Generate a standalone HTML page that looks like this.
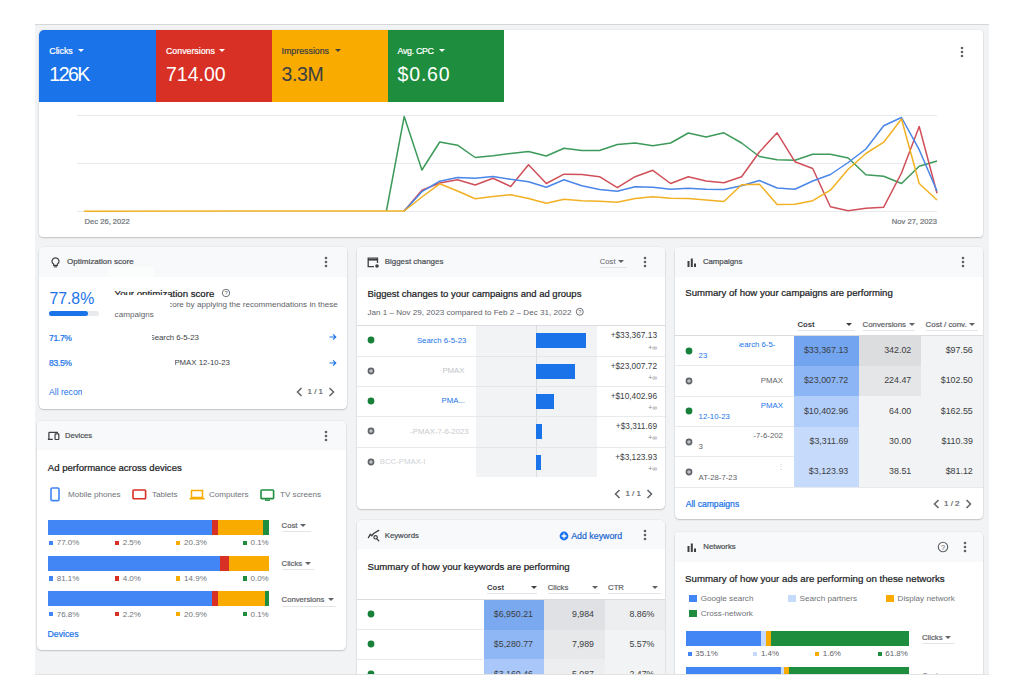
<!DOCTYPE html><html><head><meta charset="utf-8"><style>
html,body{margin:0;padding:0;background:#fff;width:1024px;height:700px;overflow:hidden;position:relative;font-family:"Liberation Sans", sans-serif}
.t{position:absolute;white-space:nowrap;line-height:1;}
.r{position:absolute;}
.card{position:absolute;background:#fff;border-radius:6px;box-shadow:0 1px 1.5px rgba(60,64,67,.24),0 0 0 0.6px rgba(60,64,67,.07);overflow:hidden}
.hdr{position:absolute;left:0;top:0;right:0;background:#f8f9fa}
</style></head><body>
<div class="r" style="left:35.00px;top:24.00px;width:954.00px;height:651.00px;background:#f1f3f4;"></div>
<div class="r" style="left:35.00px;top:24.00px;width:954.00px;height:1.00px;background:#d5d7d9;"></div>
<div class="card" style="left:39px;top:30px;width:944px;height:207px;border-radius:4px">
</div>
<div class="r" style="left:39.00px;top:30.00px;width:465.00px;height:72.20px;background:linear-gradient(to right,#1a73e8 0 117.1px,#d93025 117.1px 232.7px,#f9ab00 232.7px 348.8px,#1e8e3e 348.8px);border-top-left-radius:5px"></div>
<div class="t" style="left:49.30px;top:46.85px;font-size:8.8px;color:#fff;font-weight:400;-webkit-text-stroke:0.22px #fff;">Clicks</div>
<div class="r" style="left:77.50px;top:49.00px;width:0;height:0;border-left:3.6px solid transparent;border-right:3.6px solid transparent;border-top:3.6px solid #fff"></div>
<div class="t" style="left:49.30px;top:64.89px;font-size:19.5px;color:#fff;font-weight:400;letter-spacing:-1.5px;">126K</div>
<div class="t" style="left:166.00px;top:46.85px;font-size:8.8px;color:#fff;font-weight:400;-webkit-text-stroke:0.22px #fff;">Conversions</div>
<div class="r" style="left:219.10px;top:49.00px;width:0;height:0;border-left:3.6px solid transparent;border-right:3.6px solid transparent;border-top:3.6px solid #fff"></div>
<div class="t" style="left:166.00px;top:64.89px;font-size:19.5px;color:#fff;font-weight:400;letter-spacing:0px;">714.00</div>
<div class="t" style="left:281.60px;top:46.85px;font-size:8.8px;color:#3c4043;font-weight:400;-webkit-text-stroke:0.22px #3c4043;">Impressions</div>
<div class="r" style="left:335.00px;top:49.00px;width:0;height:0;border-left:3.6px solid transparent;border-right:3.6px solid transparent;border-top:3.6px solid #3c4043"></div>
<div class="t" style="left:281.60px;top:64.89px;font-size:19.5px;color:#3c4043;font-weight:400;letter-spacing:-0.4px;">3.3M</div>
<div class="t" style="left:397.60px;top:46.85px;font-size:8.8px;color:#fff;font-weight:400;letter-spacing:-0.3px;-webkit-text-stroke:0.22px #fff;">Avg. CPC</div>
<div class="r" style="left:438.90px;top:49.00px;width:0;height:0;border-left:3.6px solid transparent;border-right:3.6px solid transparent;border-top:3.6px solid #fff"></div>
<div class="t" style="left:397.60px;top:64.89px;font-size:19.5px;color:#fff;font-weight:400;letter-spacing:0.8px;">$0.60</div>
<svg class="r" style="left:959.00px;top:45.00px" width="6" height="14" viewBox="0 0 6 14"><circle cx="3" cy="3" r="1.3" fill="#5f6368"/><circle cx="3" cy="7" r="1.3" fill="#5f6368"/><circle cx="3" cy="11" r="1.3" fill="#5f6368"/></svg>
<div class="r" style="left:77.00px;top:114.50px;width:860.00px;height:1.00px;background:#e8eaed;"></div>
<div class="r" style="left:77.00px;top:163.00px;width:860.00px;height:1.00px;background:#e8eaed;"></div>
<div class="r" style="left:77.00px;top:210.50px;width:860.00px;height:1.00px;background:#e8eaed;"></div>
<div class="t" style="left:84.60px;top:217.77px;font-size:7.6px;color:#70757a;font-weight:400;-webkit-text-stroke:0.22px #70757a;">Dec 26, 2022</div>
<div class="t" style="right:87.00px;top:217.77px;font-size:7.6px;color:#70757a;font-weight:400;-webkit-text-stroke:0.22px #70757a;">Nov 27, 2023</div>
<svg class="r" style="left:0;top:0" width="1024" height="240" viewBox="0 0 1024 240"><polyline points="386.4,211.0 404.2,116.5 421.9,170.0 439.7,142.0 457.5,145.2 475.2,157.5 493.0,155.7 510.7,153.5 528.5,151.5 546.3,156.0 564.0,148.2 581.8,150.5 599.5,150.5 617.3,144.5 635.1,143.0 652.8,145.7 670.6,143.0 688.3,133.0 706.1,137.0 723.9,132.8 741.6,143.0 759.4,156.5 777.1,159.8 794.9,160.2 812.7,154.2 830.4,154.2 848.2,158.0 865.9,174.8 883.7,176.3 901.5,183.5 919.2,166.2 937.0,161.0" fill="none" stroke="#3d9a5a" stroke-width="1.5" stroke-linejoin="round"/><polyline points="404.2,211.0 421.9,190.2 439.7,183.0 457.5,179.7 475.2,185.0 493.0,178.2 510.7,186.5 528.5,164.7 546.3,183.5 564.0,174.2 581.8,174.5 599.5,176.7 617.3,187.7 635.1,176.7 652.8,170.3 670.6,183.5 688.3,176.7 706.1,181.0 723.9,182.7 741.6,176.7 759.4,152.0 777.1,132.8 794.9,161.7 812.7,168.5 830.4,206.7 848.2,210.8 865.9,208.2 883.7,207.2 901.5,173.0 919.2,126.5 937.0,193.2" fill="none" stroke="#d0505a" stroke-width="1.5" stroke-linejoin="round"/><polyline points="404.2,211.0 421.9,191.7 439.7,181.2 457.5,177.5 475.2,178.2 493.0,176.5 510.7,179.3 528.5,181.7 546.3,187.2 564.0,179.7 581.8,185.7 599.5,189.5 617.3,191.3 635.1,186.8 652.8,187.2 670.6,189.2 688.3,188.3 706.1,189.3 723.9,189.5 741.6,185.7 759.4,180.5 777.1,188.0 794.9,189.2 812.7,181.0 830.4,174.5 848.2,162.5 865.9,149.0 883.7,125.7 901.5,117.5 919.2,149.7 937.0,191.0" fill="none" stroke="#4a86e8" stroke-width="1.5" stroke-linejoin="round"/><polyline points="84.0,211.2 404.2,211.0 421.9,197.0 439.7,183.8 457.5,191.0 475.2,198.8 493.0,196.5 510.7,194.7 528.5,198.5 546.3,203.3 564.0,199.2 581.8,200.7 599.5,201.3 617.3,202.2 635.1,198.5 652.8,196.7 670.6,198.2 688.3,198.5 706.1,200.0 723.9,201.5 741.6,184.7 759.4,184.2 777.1,204.5 794.9,204.2 812.7,200.7 830.4,190.2 848.2,169.2 865.9,153.5 883.7,142.2 901.5,119.0 919.2,183.5 937.0,200.0" fill="none" stroke="#f2b124" stroke-width="1.5" stroke-linejoin="round"/></svg>
<div class="card" style="left:39px;top:247px;width:308px;height:162px;border-radius:4.5px">
<div class="hdr" style="height:30px"></div>
</div>
<svg class="r" style="left:51px;top:256.5px;" width="10" height="11" viewBox="0 0 10 11"><path d="M4.5 0.9a3.3 3.3 0 0 0-1.9 6.1V8.3h3.8V7a3.3 3.3 0 0 0-1.9-6.1z" fill="none" stroke="#3c4043" stroke-width="1.15"/><rect x="2.9" y="9.3" width="3.2" height="1.1" fill="#3c4043"/></svg>
<div class="t" style="left:67.00px;top:257.89px;font-size:8.05px;color:#4d5156;font-weight:400;-webkit-text-stroke:0.22px #4d5156;">Optimization score</div>
<svg class="r" style="left:323.00px;top:255.00px" width="6" height="14" viewBox="0 0 6 14"><circle cx="3" cy="3" r="1.3" fill="#5f6368"/><circle cx="3" cy="7" r="1.3" fill="#5f6368"/><circle cx="3" cy="11" r="1.3" fill="#5f6368"/></svg>
<div class="t" style="left:49.40px;top:290.63px;font-size:15.8px;color:#1a73e8;font-weight:400;">77.8%</div>
<div class="r" style="left:49.40px;top:311.00px;width:49.60px;height:4.60px;background:#e8eaed;border-radius:3px"></div>
<div class="r" style="left:49.40px;top:311.00px;width:38.60px;height:4.60px;background:#1a73e8;border-radius:3px"></div>
<div class="t" style="left:114.60px;top:288.53px;font-size:9.65px;color:#202124;font-weight:400;-webkit-text-stroke:0.22px #202124;">Your optimization score</div>
<svg class="r" style="left:220.7px;top:287.7px;" width="10" height="10" viewBox="0 0 10 10"><circle cx="5" cy="5" r="3.7" fill="none" stroke="#5f6368" stroke-width="0.9"/><text x="5" y="7.2" font-size="5.8" text-anchor="middle" fill="#5f6368" font-family="Liberation Sans">?</text></svg>
<div class="t" style="left:114.60px;top:301.14px;font-size:8.1px;color:#5f6368;font-weight:400;">Improve your score by applying the recommendations in these</div>
<div class="t" style="left:114.60px;top:310.94px;font-size:8.1px;color:#5f6368;font-weight:400;">campaigns</div>
<div class="t" style="left:49.00px;top:333.72px;font-size:8.6px;color:#1a73e8;font-weight:400;letter-spacing:-0.35px;-webkit-text-stroke:0.22px #1a73e8;">71.7%</div>
<div class="t" style="right:825.10px;top:334.00px;font-size:7.8px;color:#3c4043;font-weight:400;">Search 6-5-23</div>
<svg class="r" style="left:328.5px;top:333.3px;" width="8" height="8" viewBox="0 0 8 8"><path d="M0.5 4h6M4 1.3L6.8 4L4 6.7" fill="none" stroke="#1a73e8" stroke-width="1.1"/></svg>
<div class="t" style="left:49.00px;top:359.12px;font-size:8.6px;color:#1a73e8;font-weight:400;letter-spacing:-0.35px;-webkit-text-stroke:0.22px #1a73e8;">83.5%</div>
<div class="t" style="right:794.10px;top:358.80px;font-size:7.8px;color:#3c4043;font-weight:400;">PMAX 12-10-23</div>
<svg class="r" style="left:328.5px;top:358.8px;" width="8" height="8" viewBox="0 0 8 8"><path d="M0.5 4h6M4 1.3L6.8 4L4 6.7" fill="none" stroke="#1a73e8" stroke-width="1.1"/></svg>
<div class="t" style="left:49.00px;top:387.92px;font-size:8.6px;color:#1a73e8;font-weight:400;">All recommendations</div>
<svg class="r" style="left:296.00px;top:387.30px;" width="7" height="10" viewBox="0 0 7 10"><polyline points="5.5,1 1.5,5 5.5,9" fill="none" stroke="#5f6368" stroke-width="1.5"/></svg>
<div class="t" style="left:307.50px;top:388.43px;font-size:8px;color:#5f6368;font-weight:400;-webkit-text-stroke:0.22px #5f6368;">1 / 1</div>
<svg class="r" style="left:328.10px;top:387.30px;" width="7" height="10" viewBox="0 0 7 10"><polyline points="1.5,1 5.5,5 1.5,9" fill="none" stroke="#5f6368" stroke-width="1.5"/></svg>
<div class="r" style="left:107.60px;top:266.60px;width:46.00px;height:10.50px;background:rgba(255,255,255,0.45);"></div>
<div class="r" style="left:108.00px;top:295.00px;width:62.40px;height:15.00px;background:#fff;"></div>
<div class="r" style="left:105.00px;top:327.00px;width:46.50px;height:22.00px;background:#fff;"></div>
<div class="r" style="left:105.00px;top:352.00px;width:70.00px;height:22.00px;background:#fff;"></div>
<div class="r" style="left:81.60px;top:383.00px;width:80.00px;height:18.00px;background:#fff;"></div>
<div class="card" style="left:37.2px;top:421px;width:309px;height:229px;border-radius:4.5px">
<div class="hdr" style="height:29px"></div>
</div>
<svg class="r" style="left:47px;top:431px;" width="13" height="10" viewBox="0 0 13 10"><path d="M1.9 1.3H11M1.9 1.3V8.4M0.9 8.4H5.8" fill="none" stroke="#3c4043" stroke-width="1.25"/><rect x="8.05" y="2.95" width="3.75" height="5.55" rx="0.4" fill="none" stroke="#3c4043" stroke-width="1.2"/></svg>
<div class="t" style="left:65.00px;top:432.37px;font-size:7.6px;color:#4d5156;font-weight:400;-webkit-text-stroke:0.22px #4d5156;">Devices</div>
<svg class="r" style="left:322.90px;top:429.00px" width="6" height="14" viewBox="0 0 6 14"><circle cx="3" cy="3" r="1.3" fill="#5f6368"/><circle cx="3" cy="7" r="1.3" fill="#5f6368"/><circle cx="3" cy="11" r="1.3" fill="#5f6368"/></svg>
<div class="t" style="left:47.80px;top:462.90px;font-size:9.57px;color:#202124;font-weight:400;-webkit-text-stroke:0.22px #202124;">Ad performance across devices</div>
<svg class="r" style="left:50px;top:486.5px;" width="10" height="15" viewBox="0 0 10 15"><rect x="1" y="1" width="8" height="12.6" rx="1.2" fill="none" stroke="#4285f4" stroke-width="1.6"/></svg>
<div class="t" style="left:67.90px;top:490.94px;font-size:8.1px;color:#6f7378;font-weight:400;">Mobile phones</div>
<svg class="r" style="left:131.5px;top:489px;" width="15" height="11" viewBox="0 0 15 11"><rect x="1" y="1" width="12.6" height="8.8" rx="0.8" fill="none" stroke="#d93025" stroke-width="1.6"/></svg>
<div class="t" style="left:152.00px;top:490.94px;font-size:8.1px;color:#6f7378;font-weight:400;">Tablets</div>
<svg class="r" style="left:188.5px;top:489px;" width="16" height="12" viewBox="0 0 16 12"><path d="M2.5 1.5h11v7h-11z" fill="none" stroke="#f9ab00" stroke-width="1.5"/><rect x="0.5" y="9" width="15" height="1.5" fill="#f9ab00"/></svg>
<div class="t" style="left:209.00px;top:490.94px;font-size:8.1px;color:#6f7378;font-weight:400;">Computers</div>
<svg class="r" style="left:260px;top:488.5px;" width="15" height="13" viewBox="0 0 15 13"><rect x="1" y="1" width="12.6" height="8.6" rx="0.8" fill="none" stroke="#1e8e3e" stroke-width="1.6"/><rect x="5" y="10.5" width="5" height="1.4" fill="#1e8e3e"/></svg>
<div class="t" style="left:280.00px;top:490.94px;font-size:8.1px;color:#6f7378;font-weight:400;">TV screens</div>
<div class="r" style="left:47.60px;top:520.00px;width:164.10px;height:15.00px;background:#4285f4;"></div>
<div class="r" style="left:211.70px;top:520.00px;width:6.30px;height:15.00px;background:#d93025;"></div>
<div class="r" style="left:218.00px;top:520.00px;width:44.50px;height:15.00px;background:#f9ab00;"></div>
<div class="r" style="left:262.50px;top:520.00px;width:6.70px;height:15.00px;background:#1e8e3e;"></div>
<div class="r" style="left:48.70px;top:540.70px;width:4.40px;height:4.40px;background:#4285f4;"></div>
<div class="t" style="left:56.70px;top:539.43px;font-size:8px;color:#70757a;font-weight:400;">77.0%</div>
<div class="r" style="left:114.70px;top:540.70px;width:4.40px;height:4.40px;background:#d93025;"></div>
<div class="t" style="left:122.70px;top:539.43px;font-size:8px;color:#70757a;font-weight:400;">2.5%</div>
<div class="r" style="left:176.10px;top:540.70px;width:4.40px;height:4.40px;background:#f9ab00;"></div>
<div class="t" style="left:184.10px;top:539.43px;font-size:8px;color:#70757a;font-weight:400;">20.3%</div>
<div class="r" style="left:242.50px;top:540.70px;width:4.40px;height:4.40px;background:#1e8e3e;"></div>
<div class="t" style="left:250.50px;top:539.43px;font-size:8px;color:#70757a;font-weight:400;">0.1%</div>
<div class="t" style="left:281.60px;top:522.28px;font-size:7.7px;color:#5f6368;font-weight:400;-webkit-text-stroke:0.22px #5f6368;">Cost</div>
<div class="r" style="left:300.10px;top:524.25px;width:0;height:0;border-left:3.5px solid transparent;border-right:3.5px solid transparent;border-top:3.5px solid #5f6368"></div>
<div class="r" style="left:281.60px;top:531.30px;width:29.40px;height:0.80px;background:#e3e5e8;"></div>
<div class="r" style="left:47.60px;top:555.60px;width:172.50px;height:15.00px;background:#4285f4;"></div>
<div class="r" style="left:220.10px;top:555.60px;width:9.10px;height:15.00px;background:#d93025;"></div>
<div class="r" style="left:229.20px;top:555.60px;width:40.00px;height:15.00px;background:#f9ab00;"></div>
<div class="r" style="left:48.70px;top:576.30px;width:4.40px;height:4.40px;background:#4285f4;"></div>
<div class="t" style="left:56.70px;top:575.03px;font-size:8px;color:#70757a;font-weight:400;">81.1%</div>
<div class="r" style="left:114.70px;top:576.30px;width:4.40px;height:4.40px;background:#d93025;"></div>
<div class="t" style="left:122.70px;top:575.03px;font-size:8px;color:#70757a;font-weight:400;">4.0%</div>
<div class="r" style="left:176.10px;top:576.30px;width:4.40px;height:4.40px;background:#f9ab00;"></div>
<div class="t" style="left:184.10px;top:575.03px;font-size:8px;color:#70757a;font-weight:400;">14.9%</div>
<div class="r" style="left:242.50px;top:576.30px;width:4.40px;height:4.40px;background:#1e8e3e;"></div>
<div class="t" style="left:250.50px;top:575.03px;font-size:8px;color:#70757a;font-weight:400;">0.0%</div>
<div class="t" style="left:281.60px;top:559.58px;font-size:7.7px;color:#5f6368;font-weight:400;-webkit-text-stroke:0.22px #5f6368;">Clicks</div>
<div class="r" style="left:305.10px;top:561.55px;width:0;height:0;border-left:3.5px solid transparent;border-right:3.5px solid transparent;border-top:3.5px solid #5f6368"></div>
<div class="r" style="left:281.60px;top:568.60px;width:32.40px;height:0.80px;background:#e3e5e8;"></div>
<div class="r" style="left:47.60px;top:591.10px;width:164.10px;height:15.00px;background:#4285f4;"></div>
<div class="r" style="left:211.70px;top:591.10px;width:6.30px;height:15.00px;background:#d93025;"></div>
<div class="r" style="left:218.00px;top:591.10px;width:46.60px;height:15.00px;background:#f9ab00;"></div>
<div class="r" style="left:264.60px;top:591.10px;width:4.60px;height:15.00px;background:#1e8e3e;"></div>
<div class="r" style="left:48.70px;top:611.80px;width:4.40px;height:4.40px;background:#4285f4;"></div>
<div class="t" style="left:56.70px;top:610.53px;font-size:8px;color:#70757a;font-weight:400;">76.8%</div>
<div class="r" style="left:114.70px;top:611.80px;width:4.40px;height:4.40px;background:#d93025;"></div>
<div class="t" style="left:122.70px;top:610.53px;font-size:8px;color:#70757a;font-weight:400;">2.2%</div>
<div class="r" style="left:176.10px;top:611.80px;width:4.40px;height:4.40px;background:#f9ab00;"></div>
<div class="t" style="left:184.10px;top:610.53px;font-size:8px;color:#70757a;font-weight:400;">20.9%</div>
<div class="r" style="left:242.50px;top:611.80px;width:4.40px;height:4.40px;background:#1e8e3e;"></div>
<div class="t" style="left:250.50px;top:610.53px;font-size:8px;color:#70757a;font-weight:400;">0.1%</div>
<div class="t" style="left:281.60px;top:596.48px;font-size:7.7px;color:#5f6368;font-weight:400;-webkit-text-stroke:0.22px #5f6368;">Conversions</div>
<div class="r" style="left:327.60px;top:598.45px;width:0;height:0;border-left:3.5px solid transparent;border-right:3.5px solid transparent;border-top:3.5px solid #5f6368"></div>
<div class="r" style="left:281.60px;top:605.50px;width:54.40px;height:0.80px;background:#e3e5e8;"></div>
<div class="t" style="left:47.60px;top:629.94px;font-size:8.7px;color:#1a73e8;font-weight:400;-webkit-text-stroke:0.22px #1a73e8;">Devices</div>
<div class="card" style="left:357px;top:247px;width:308px;height:262px;border-radius:4.5px">
<div class="hdr" style="height:30px"></div>
</div>
<svg class="r" style="left:367px;top:256.5px;" width="13" height="11" viewBox="0 0 13 11"><path d="M10.5 6V1.2H1.2v8.5H7" fill="none" stroke="#3c4043" stroke-width="1.3"/><path d="M1.2 2.8h9.3" stroke="#3c4043" stroke-width="1.6"/><circle cx="10" cy="9" r="1.8" fill="#3c4043"/></svg>
<div class="t" style="left:384.70px;top:257.97px;font-size:7.95px;color:#4d5156;font-weight:400;-webkit-text-stroke:0.22px #4d5156;">Biggest changes</div>
<div class="t" style="left:599.80px;top:258.28px;font-size:7.7px;color:#5f6368;font-weight:400;">Cost</div>
<div class="r" style="left:618.30px;top:260.25px;width:0;height:0;border-left:3.5px solid transparent;border-right:3.5px solid transparent;border-top:3.5px solid #5f6368"></div>
<div class="r" style="left:599.80px;top:267.30px;width:27.00px;height:0.80px;background:#e3e5e8;"></div>
<svg class="r" style="left:641.50px;top:255.00px" width="6" height="14" viewBox="0 0 6 14"><circle cx="3" cy="3" r="1.3" fill="#5f6368"/><circle cx="3" cy="7" r="1.3" fill="#5f6368"/><circle cx="3" cy="11" r="1.3" fill="#5f6368"/></svg>
<div class="t" style="left:367.50px;top:288.56px;font-size:9.5px;color:#202124;font-weight:400;-webkit-text-stroke:0.22px #202124;">Biggest changes to your campaigns and ad groups</div>
<div class="t" style="left:367.50px;top:308.76px;font-size:8.08px;color:#5f6368;font-weight:400;">Jan 1 &ndash; Nov 29, 2023 compared to Feb 2 &ndash; Dec 31, 2022</div>
<svg class="r" style="left:574.6px;top:307.4px;" width="9.6" height="9.6" viewBox="0 0 9.6 9.6"><circle cx="4.8" cy="4.8" r="3.5" fill="none" stroke="#5f6368" stroke-width="0.9"/><text x="4.8" y="6.89" font-size="5.51" text-anchor="middle" fill="#5f6368" font-family="Liberation Sans">?</text></svg>
<div class="r" style="left:357.00px;top:325.00px;width:308.00px;height:0.80px;background:#dadce0;"></div>
<div class="r" style="left:475.50px;top:325.50px;width:121.60px;height:151.00px;background:#f1f3f4;"></div>
<div class="r" style="left:535.60px;top:325.50px;width:0.80px;height:151.00px;background:#dadce0;"></div>
<div class="r" style="left:536.10px;top:333.30px;width:49.50px;height:15.00px;background:#1a73e8;"></div>
<div class="t" style="right:367.00px;top:331.47px;font-size:8.3px;color:#3c4043;font-weight:400;">+$33,367.13</div>
<div class="t" style="right:367.00px;top:344.54px;font-size:6.8px;color:#80868b;font-weight:400;">+&infin;</div>
<svg class="r" style="left:366.00px;top:335.40px;" width="10" height="10" viewBox="0 0 10 10"><circle cx="5" cy="5" r="3.4" fill="#188038"/></svg>
<div class="r" style="left:357.00px;top:355.60px;width:308.00px;height:0.80px;background:#e8eaed;"></div>
<div class="r" style="left:536.10px;top:363.60px;width:39.40px;height:15.00px;background:#1a73e8;"></div>
<div class="t" style="right:367.00px;top:361.77px;font-size:8.3px;color:#3c4043;font-weight:400;">+$23,007.72</div>
<div class="t" style="right:367.00px;top:374.84px;font-size:6.8px;color:#80868b;font-weight:400;">+&infin;</div>
<svg class="r" style="left:366.00px;top:365.70px;" width="10" height="10" viewBox="0 0 10 10"><circle cx="5" cy="5" r="2.6" fill="#bdc1c6" stroke="#5f6368" stroke-width="1.6"/></svg>
<div class="r" style="left:357.00px;top:385.90px;width:308.00px;height:0.80px;background:#e8eaed;"></div>
<div class="r" style="left:536.10px;top:393.90px;width:17.50px;height:15.00px;background:#1a73e8;"></div>
<div class="t" style="right:367.00px;top:392.07px;font-size:8.3px;color:#3c4043;font-weight:400;">+$10,402.96</div>
<div class="t" style="right:367.00px;top:405.14px;font-size:6.8px;color:#80868b;font-weight:400;">+&infin;</div>
<svg class="r" style="left:366.00px;top:396.00px;" width="10" height="10" viewBox="0 0 10 10"><circle cx="5" cy="5" r="3.4" fill="#188038"/></svg>
<div class="r" style="left:357.00px;top:416.20px;width:308.00px;height:0.80px;background:#e8eaed;"></div>
<div class="r" style="left:536.10px;top:424.20px;width:5.70px;height:15.00px;background:#1a73e8;"></div>
<div class="t" style="right:367.00px;top:422.37px;font-size:8.3px;color:#3c4043;font-weight:400;">+$3,311.69</div>
<div class="t" style="right:367.00px;top:435.44px;font-size:6.8px;color:#80868b;font-weight:400;">+&infin;</div>
<svg class="r" style="left:366.00px;top:426.30px;" width="10" height="10" viewBox="0 0 10 10"><circle cx="5" cy="5" r="2.6" fill="#bdc1c6" stroke="#5f6368" stroke-width="1.6"/></svg>
<div class="r" style="left:357.00px;top:446.50px;width:308.00px;height:0.80px;background:#e8eaed;"></div>
<div class="r" style="left:536.10px;top:454.50px;width:5.00px;height:15.00px;background:#1a73e8;"></div>
<div class="t" style="right:367.00px;top:452.67px;font-size:8.3px;color:#3c4043;font-weight:400;">+$3,123.93</div>
<div class="t" style="right:367.00px;top:465.74px;font-size:6.8px;color:#80868b;font-weight:400;">+&infin;</div>
<svg class="r" style="left:366.00px;top:456.60px;" width="10" height="10" viewBox="0 0 10 10"><circle cx="5" cy="5" r="2.6" fill="#bdc1c6" stroke="#5f6368" stroke-width="1.6"/></svg>
<div class="t" style="right:557.70px;top:336.70px;font-size:7.8px;color:#1a73e8;font-weight:400;">Search 6-5-23</div>
<div class="t" style="right:559.50px;top:367.00px;font-size:7.8px;color:#c0c4c8;font-weight:400;">PMAX</div>
<div class="t" style="right:559.10px;top:397.30px;font-size:7.8px;color:#1a73e8;font-weight:400;">PMA...</div>
<div class="t" style="right:555.30px;top:427.60px;font-size:7.8px;color:#c8cbcf;font-weight:400;">BCC-PMAX-7-6-2023</div>
<div class="t" style="left:379.70px;top:457.90px;font-size:7.8px;color:#d0d3d6;font-weight:400;">BCC-PMAX-LAT-28-7-23</div>
<div class="r" style="left:378.00px;top:330.00px;width:30.00px;height:22.00px;background:#fff;"></div>
<div class="r" style="left:380.00px;top:360.00px;width:60.00px;height:22.00px;background:#fff;"></div>
<div class="r" style="left:378.00px;top:420.00px;width:32.00px;height:22.00px;background:#fff;"></div>
<div class="r" style="left:425.00px;top:450.00px;width:50.00px;height:24.00px;background:#fff;"></div>
<div class="r" style="left:475.50px;top:355.60px;width:121.60px;height:0.80px;background:#e4e6e9;"></div>
<div class="r" style="left:475.50px;top:385.90px;width:121.60px;height:0.80px;background:#e4e6e9;"></div>
<div class="r" style="left:475.50px;top:416.20px;width:121.60px;height:0.80px;background:#e4e6e9;"></div>
<div class="r" style="left:475.50px;top:446.50px;width:121.60px;height:0.80px;background:#e4e6e9;"></div>
<svg class="r" style="left:613.90px;top:488.75px;" width="7" height="10" viewBox="0 0 7 10"><polyline points="5.5,1 1.5,5 5.5,9" fill="none" stroke="#5f6368" stroke-width="1.5"/></svg>
<div class="t" style="left:625.40px;top:489.88px;font-size:8px;color:#5f6368;font-weight:400;-webkit-text-stroke:0.22px #5f6368;">1 / 1</div>
<svg class="r" style="left:646.00px;top:488.75px;" width="7" height="10" viewBox="0 0 7 10"><polyline points="1.5,1 5.5,5 1.5,9" fill="none" stroke="#5f6368" stroke-width="1.5"/></svg>
<div class="card" style="left:675px;top:247px;width:308px;height:272px;border-radius:4.5px">
<div class="hdr" style="height:30px"></div>
</div>
<svg class="r" style="left:686.5px;top:257.5px;" width="10" height="9" viewBox="0 0 10 9"><rect x="0.5" y="3" width="2" height="6" fill="#3c4043"/><rect x="3.8" y="0.5" width="2" height="8.5" fill="#3c4043"/><rect x="7" y="5.5" width="2" height="3.5" fill="#3c4043"/></svg>
<div class="t" style="left:702.90px;top:258.10px;font-size:7.8px;color:#4d5156;font-weight:400;-webkit-text-stroke:0.22px #4d5156;">Campaigns</div>
<svg class="r" style="left:959.50px;top:255.00px" width="6" height="14" viewBox="0 0 6 14"><circle cx="3" cy="3" r="1.3" fill="#5f6368"/><circle cx="3" cy="7" r="1.3" fill="#5f6368"/><circle cx="3" cy="11" r="1.3" fill="#5f6368"/></svg>
<div class="t" style="left:685.30px;top:288.47px;font-size:9.6px;color:#202124;font-weight:400;-webkit-text-stroke:0.22px #202124;">Summary of how your campaigns are performing</div>
<div class="t" style="left:797.40px;top:320.68px;font-size:7.7px;color:#3c4043;font-weight:700;">Cost</div>
<div class="r" style="left:846.20px;top:322.65px;width:0;height:0;border-left:3.5px solid transparent;border-right:3.5px solid transparent;border-top:3.5px solid #3c4043"></div>
<div class="r" style="left:797.40px;top:329.70px;width:57.60px;height:0.80px;background:#e3e5e8;"></div>
<div class="t" style="left:862.60px;top:320.60px;font-size:7.8px;color:#5f6368;font-weight:400;-webkit-text-stroke:0.22px #5f6368;">Conversions</div>
<div class="r" style="left:908.80px;top:322.65px;width:0;height:0;border-left:3.5px solid transparent;border-right:3.5px solid transparent;border-top:3.5px solid #5f6368"></div>
<div class="r" style="left:862.60px;top:329.70px;width:52.80px;height:0.80px;background:#e3e5e8;"></div>
<div class="t" style="left:925.60px;top:320.51px;font-size:7.9px;color:#5f6368;font-weight:400;-webkit-text-stroke:0.22px #5f6368;">Cost / conv.</div>
<div class="r" style="left:969.30px;top:322.65px;width:0;height:0;border-left:3.5px solid transparent;border-right:3.5px solid transparent;border-top:3.5px solid #5f6368"></div>
<div class="r" style="left:925.60px;top:329.70px;width:52.90px;height:0.80px;background:#e3e5e8;"></div>
<div class="r" style="left:675.00px;top:335.00px;width:308.00px;height:0.80px;background:#dadce0;"></div>
<div class="r" style="left:794.00px;top:335.80px;width:65.00px;height:30.30px;background:#72a4ef;"></div>
<div class="r" style="left:859.00px;top:335.80px;width:62.00px;height:30.30px;background:#dcdddf;"></div>
<div class="r" style="left:921.00px;top:335.80px;width:62.00px;height:30.30px;background:#f1f3f4;"></div>
<div class="t" style="right:175.70px;top:345.97px;font-size:8.9px;color:#3c4043;font-weight:400;">$33,367.13</div>
<div class="t" style="right:112.70px;top:345.97px;font-size:8.9px;color:#3c4043;font-weight:400;">342.02</div>
<div class="t" style="right:51.20px;top:345.97px;font-size:8.9px;color:#3c4043;font-weight:400;">$97.56</div>
<svg class="r" style="left:684.10px;top:345.60px;" width="10" height="10" viewBox="0 0 10 10"><circle cx="5" cy="5" r="3.4" fill="#188038"/></svg>
<div class="r" style="left:794.00px;top:366.10px;width:65.00px;height:30.30px;background:#8cb5f6;"></div>
<div class="r" style="left:859.00px;top:366.10px;width:62.00px;height:30.30px;background:#e5e6e8;"></div>
<div class="r" style="left:921.00px;top:366.10px;width:62.00px;height:30.30px;background:#f1f3f4;"></div>
<div class="r" style="left:675.00px;top:365.30px;width:119.00px;height:0.80px;background:#e8eaed;"></div>
<div class="t" style="right:175.70px;top:376.27px;font-size:8.9px;color:#3c4043;font-weight:400;">$23,007.72</div>
<div class="t" style="right:112.70px;top:376.27px;font-size:8.9px;color:#3c4043;font-weight:400;">224.47</div>
<div class="t" style="right:51.20px;top:376.27px;font-size:8.9px;color:#3c4043;font-weight:400;">$102.50</div>
<svg class="r" style="left:684.10px;top:375.90px;" width="10" height="10" viewBox="0 0 10 10"><circle cx="5" cy="5" r="2.6" fill="#bdc1c6" stroke="#5f6368" stroke-width="1.6"/></svg>
<div class="r" style="left:794.00px;top:396.40px;width:65.00px;height:30.30px;background:#b1cdfa;"></div>
<div class="r" style="left:859.00px;top:396.40px;width:62.00px;height:30.30px;background:#f2f3f4;"></div>
<div class="r" style="left:921.00px;top:396.40px;width:62.00px;height:30.30px;background:#f1f3f4;"></div>
<div class="r" style="left:675.00px;top:395.60px;width:119.00px;height:0.80px;background:#e8eaed;"></div>
<div class="t" style="right:175.70px;top:406.57px;font-size:8.9px;color:#3c4043;font-weight:400;">$10,402.96</div>
<div class="t" style="right:112.70px;top:406.57px;font-size:8.9px;color:#3c4043;font-weight:400;">64.00</div>
<div class="t" style="right:51.20px;top:406.57px;font-size:8.9px;color:#3c4043;font-weight:400;">$162.55</div>
<svg class="r" style="left:684.10px;top:406.20px;" width="10" height="10" viewBox="0 0 10 10"><circle cx="5" cy="5" r="3.4" fill="#188038"/></svg>
<div class="r" style="left:794.00px;top:426.70px;width:65.00px;height:30.30px;background:#c6dafb;"></div>
<div class="r" style="left:859.00px;top:426.70px;width:62.00px;height:30.30px;background:#f2f3f4;"></div>
<div class="r" style="left:921.00px;top:426.70px;width:62.00px;height:30.30px;background:#f1f3f4;"></div>
<div class="r" style="left:675.00px;top:425.90px;width:119.00px;height:0.80px;background:#e8eaed;"></div>
<div class="t" style="right:175.70px;top:436.87px;font-size:8.9px;color:#3c4043;font-weight:400;">$3,311.69</div>
<div class="t" style="right:112.70px;top:436.87px;font-size:8.9px;color:#3c4043;font-weight:400;">30.00</div>
<div class="t" style="right:51.20px;top:436.87px;font-size:8.9px;color:#3c4043;font-weight:400;">$110.39</div>
<svg class="r" style="left:684.10px;top:436.50px;" width="10" height="10" viewBox="0 0 10 10"><circle cx="5" cy="5" r="2.6" fill="#bdc1c6" stroke="#5f6368" stroke-width="1.6"/></svg>
<div class="r" style="left:794.00px;top:457.00px;width:65.00px;height:30.30px;background:#c6dafb;"></div>
<div class="r" style="left:859.00px;top:457.00px;width:62.00px;height:30.30px;background:#f2f3f4;"></div>
<div class="r" style="left:921.00px;top:457.00px;width:62.00px;height:30.30px;background:#f1f3f4;"></div>
<div class="r" style="left:675.00px;top:456.20px;width:119.00px;height:0.80px;background:#e8eaed;"></div>
<div class="t" style="right:175.70px;top:467.17px;font-size:8.9px;color:#3c4043;font-weight:400;">$3,123.93</div>
<div class="t" style="right:112.70px;top:467.17px;font-size:8.9px;color:#3c4043;font-weight:400;">38.51</div>
<div class="t" style="right:51.20px;top:467.17px;font-size:8.9px;color:#3c4043;font-weight:400;">$81.12</div>
<svg class="r" style="left:684.10px;top:466.80px;" width="10" height="10" viewBox="0 0 10 10"><circle cx="5" cy="5" r="2.6" fill="#bdc1c6" stroke="#5f6368" stroke-width="1.6"/></svg>
<div class="r" style="left:675.00px;top:486.50px;width:308.00px;height:0.80px;background:#e8eaed;"></div>
<div class="t" style="right:248.60px;top:340.70px;font-size:7.8px;color:#1a73e8;font-weight:400;">Search 6-5-</div>
<div class="t" style="left:698.60px;top:352.30px;font-size:7.8px;color:#1a73e8;font-weight:400;">23</div>
<div class="t" style="right:241.10px;top:377.10px;font-size:7.8px;color:#5f6368;font-weight:400;">PMAX</div>
<div class="t" style="right:241.10px;top:401.90px;font-size:7.8px;color:#1a73e8;font-weight:400;">PMAX</div>
<div class="t" style="left:698.60px;top:412.80px;font-size:7.8px;color:#1a73e8;font-weight:400;">12-10-23</div>
<div class="t" style="right:241.10px;top:431.90px;font-size:7.8px;color:#5f6368;font-weight:400;">BCC-PMAX-7-6-202</div>
<div class="t" style="left:698.60px;top:443.30px;font-size:7.8px;color:#5f6368;font-weight:400;">3</div>
<div class="t" style="left:698.60px;top:473.90px;font-size:7.8px;color:#5f6368;font-weight:400;">AT-28-7-23</div>
<div class="r" style="left:696.00px;top:339.00px;width:42.50px;height:11.00px;background:#fff;"></div>
<div class="r" style="left:696.00px;top:374.00px;width:64.50px;height:13.00px;background:#fff;"></div>
<div class="r" style="left:696.00px;top:399.00px;width:64.50px;height:11.00px;background:#fff;"></div>
<div class="r" style="left:696.00px;top:429.00px;width:57.00px;height:11.00px;background:#fff;"></div>
<div class="t" style="left:776.50px;top:462.70px;font-size:7.8px;color:#c8cbcf;font-weight:400;">&#8942;</div>
<div class="t" style="left:685.70px;top:500.02px;font-size:8.6px;color:#1a73e8;font-weight:400;-webkit-text-stroke:0.22px #1a73e8;">All campaigns</div>
<svg class="r" style="left:932.50px;top:499.00px;" width="7" height="10" viewBox="0 0 7 10"><polyline points="5.5,1 1.5,5 5.5,9" fill="none" stroke="#5f6368" stroke-width="1.5"/></svg>
<div class="t" style="left:944.00px;top:500.13px;font-size:8px;color:#5f6368;font-weight:400;-webkit-text-stroke:0.22px #5f6368;">1 / 2</div>
<svg class="r" style="left:964.60px;top:499.00px;" width="7" height="10" viewBox="0 0 7 10"><polyline points="1.5,1 5.5,5 1.5,9" fill="none" stroke="#5f6368" stroke-width="1.5"/></svg>
<div class="card" style="left:357px;top:519.7px;width:308px;height:200px;border-radius:4.5px">
<div class="hdr" style="height:29.7px"></div>
</div>
<svg class="r" style="left:366px;top:528px;" width="14" height="14" viewBox="0 0 14 14"><path d="M2.4 9.6L4.4 6.2L5.7 7.9L7.6 5.5L12.7 2.4" fill="none" stroke="#3c4043" stroke-width="1.3" stroke-linecap="round" stroke-linejoin="round"/><circle cx="9.6" cy="9.3" r="1.7" fill="none" stroke="#3c4043" stroke-width="1.2"/><path d="M10.9 10.9L12.7 12.7" stroke="#3c4043" stroke-width="1.3" stroke-linecap="round"/></svg>
<div class="t" style="left:384.70px;top:531.50px;font-size:7.8px;color:#4d5156;font-weight:400;-webkit-text-stroke:0.22px #4d5156;">Keywords</div>
<svg class="r" style="left:558.7px;top:530.5px;" width="10" height="10" viewBox="0 0 10 10"><circle cx="5" cy="5" r="4.4" fill="#1a73e8"/><path d="M5 2.6v4.8M2.6 5h4.8" stroke="#fff" stroke-width="1.3"/></svg>
<div class="t" style="left:571.25px;top:531.75px;font-size:8.8px;color:#1967d2;font-weight:400;-webkit-text-stroke:0.22px #1967d2;">Add keyword</div>
<svg class="r" style="left:641.70px;top:528.30px" width="6" height="14" viewBox="0 0 6 14"><circle cx="3" cy="3" r="1.3" fill="#5f6368"/><circle cx="3" cy="7" r="1.3" fill="#5f6368"/><circle cx="3" cy="11" r="1.3" fill="#5f6368"/></svg>
<div class="t" style="left:367.50px;top:561.84px;font-size:9.64px;color:#202124;font-weight:400;-webkit-text-stroke:0.22px #202124;">Summary of how your keywords are performing</div>
<div class="t" style="left:486.90px;top:584.08px;font-size:7.7px;color:#3c4043;font-weight:700;">Cost</div>
<div class="r" style="left:530.50px;top:586.05px;width:0;height:0;border-left:3.5px solid transparent;border-right:3.5px solid transparent;border-top:3.5px solid #3c4043"></div>
<div class="r" style="left:486.90px;top:593.10px;width:50.30px;height:0.80px;background:#e3e5e8;"></div>
<div class="t" style="left:547.80px;top:584.08px;font-size:7.7px;color:#5f6368;font-weight:400;-webkit-text-stroke:0.22px #5f6368;">Clicks</div>
<div class="r" style="left:591.50px;top:586.05px;width:0;height:0;border-left:3.5px solid transparent;border-right:3.5px solid transparent;border-top:3.5px solid #5f6368"></div>
<div class="r" style="left:547.80px;top:593.10px;width:52.70px;height:0.80px;background:#e3e5e8;"></div>
<div class="t" style="left:608.10px;top:584.08px;font-size:7.7px;color:#5f6368;font-weight:400;-webkit-text-stroke:0.22px #5f6368;">CTR</div>
<div class="r" style="left:652.10px;top:586.05px;width:0;height:0;border-left:3.5px solid transparent;border-right:3.5px solid transparent;border-top:3.5px solid #5f6368"></div>
<div class="r" style="left:608.10px;top:593.10px;width:52.90px;height:0.80px;background:#e3e5e8;"></div>
<div class="r" style="left:357.00px;top:598.50px;width:308.00px;height:0.80px;background:#dadce0;"></div>
<div class="r" style="left:483.90px;top:599.55px;width:60.10px;height:30.20px;background:#7aa9f0;"></div>
<div class="r" style="left:544.00px;top:599.55px;width:61.00px;height:30.20px;background:#dfe1e4;"></div>
<div class="r" style="left:605.00px;top:599.55px;width:60.00px;height:30.20px;background:#eceef0;"></div>
<div class="t" style="right:491.00px;top:610.10px;font-size:8.8px;color:#3c4043;font-weight:400;">$6,950.21</div>
<div class="t" style="right:430.00px;top:610.10px;font-size:8.8px;color:#3c4043;font-weight:400;">9,984</div>
<div class="t" style="right:369.60px;top:610.10px;font-size:8.8px;color:#3c4043;font-weight:400;">8.86%</div>
<svg class="r" style="left:366.25px;top:608.75px;" width="10" height="10" viewBox="0 0 10 10"><circle cx="5" cy="5" r="3.4" fill="#188038"/></svg>
<div class="r" style="left:483.90px;top:629.50px;width:60.10px;height:30.20px;background:#8fb7f5;"></div>
<div class="r" style="left:544.00px;top:629.50px;width:61.00px;height:30.20px;background:#e6e8ea;"></div>
<div class="r" style="left:605.00px;top:629.50px;width:60.00px;height:30.20px;background:#f1f3f4;"></div>
<div class="r" style="left:357.00px;top:628.70px;width:126.00px;height:0.80px;background:#e8eaed;"></div>
<div class="t" style="right:491.00px;top:640.05px;font-size:8.8px;color:#3c4043;font-weight:400;">$5,280.77</div>
<div class="t" style="right:430.00px;top:640.05px;font-size:8.8px;color:#3c4043;font-weight:400;">7,989</div>
<div class="t" style="right:369.60px;top:640.05px;font-size:8.8px;color:#3c4043;font-weight:400;">5.57%</div>
<svg class="r" style="left:366.25px;top:638.70px;" width="10" height="10" viewBox="0 0 10 10"><circle cx="5" cy="5" r="3.4" fill="#188038"/></svg>
<div class="r" style="left:483.90px;top:659.45px;width:60.10px;height:30.20px;background:#a9c8f9;"></div>
<div class="r" style="left:544.00px;top:659.45px;width:61.00px;height:30.20px;background:#eceef0;"></div>
<div class="r" style="left:605.00px;top:659.45px;width:60.00px;height:30.20px;background:#f1f3f4;"></div>
<div class="r" style="left:357.00px;top:658.65px;width:126.00px;height:0.80px;background:#e8eaed;"></div>
<div class="t" style="right:491.00px;top:670.00px;font-size:8.8px;color:#3c4043;font-weight:400;">$3,160.46</div>
<div class="t" style="right:430.00px;top:670.00px;font-size:8.8px;color:#3c4043;font-weight:400;">5,087</div>
<div class="t" style="right:369.60px;top:670.00px;font-size:8.8px;color:#3c4043;font-weight:400;">2.47%</div>
<svg class="r" style="left:366.25px;top:668.65px;" width="10" height="10" viewBox="0 0 10 10"><circle cx="5" cy="5" r="3.4" fill="#188038"/></svg>
<div class="card" style="left:675px;top:532.2px;width:308px;height:200px;border-radius:4.5px">
<div class="hdr" style="height:29.7px"></div>
</div>
<svg class="r" style="left:687px;top:543px;" width="10" height="9" viewBox="0 0 10 9"><rect x="0.5" y="3" width="2" height="6" fill="#3c4043"/><rect x="3.8" y="0.5" width="2" height="8.5" fill="#3c4043"/><rect x="7" y="5.5" width="2" height="3.5" fill="#3c4043"/></svg>
<div class="t" style="left:703.25px;top:543.40px;font-size:7.8px;color:#4d5156;font-weight:400;-webkit-text-stroke:0.22px #4d5156;">Networks</div>
<svg class="r" style="left:937.25px;top:541.2px;" width="12" height="12" viewBox="0 0 12 12"><circle cx="6" cy="6" r="4.7" fill="none" stroke="#5f6368" stroke-width="1.1"/><text x="6" y="8.75" font-size="7.25" text-anchor="middle" fill="#5f6368" font-family="Liberation Sans">?</text></svg>
<svg class="r" style="left:962.10px;top:540.20px" width="6" height="14" viewBox="0 0 6 14"><circle cx="3" cy="3" r="1.3" fill="#5f6368"/><circle cx="3" cy="7" r="1.3" fill="#5f6368"/><circle cx="3" cy="11" r="1.3" fill="#5f6368"/></svg>
<div class="t" style="left:685.10px;top:573.99px;font-size:9.7px;color:#202124;font-weight:400;-webkit-text-stroke:0.22px #202124;">Summary of how your ads are performing on these networks</div>
<div class="r" style="left:689.20px;top:594.80px;width:7.60px;height:7.30px;background:#4285f4;"></div>
<div class="t" style="left:700.75px;top:595.34px;font-size:8.1px;color:#6f7378;font-weight:400;">Google search</div>
<div class="r" style="left:788.25px;top:594.80px;width:7.60px;height:7.30px;background:#c6dafc;"></div>
<div class="t" style="left:799.50px;top:595.34px;font-size:8.1px;color:#6f7378;font-weight:400;">Search partners</div>
<div class="r" style="left:886.00px;top:594.80px;width:7.60px;height:7.30px;background:#f9ab00;"></div>
<div class="t" style="left:897.60px;top:595.34px;font-size:8.1px;color:#6f7378;font-weight:400;">Display network</div>
<div class="r" style="left:689.20px;top:609.80px;width:7.60px;height:7.30px;background:#1e8e3e;"></div>
<div class="t" style="left:700.75px;top:610.34px;font-size:8.1px;color:#6f7378;font-weight:400;">Cross-network</div>
<div class="r" style="left:686.00px;top:631.25px;width:75.00px;height:15.00px;background:#4285f4;"></div>
<div class="r" style="left:761.00px;top:631.25px;width:4.75px;height:15.00px;background:#c6dafc;"></div>
<div class="r" style="left:765.75px;top:631.25px;width:5.25px;height:15.00px;background:#f9ab00;"></div>
<div class="r" style="left:771.00px;top:631.25px;width:137.60px;height:15.00px;background:#1e8e3e;"></div>
<div class="r" style="left:687.75px;top:652.00px;width:4.00px;height:4.00px;background:#4285f4;"></div>
<div class="t" style="left:695.25px;top:650.23px;font-size:8px;color:#5f6368;font-weight:400;">35.1%</div>
<div class="r" style="left:753.40px;top:652.00px;width:4.00px;height:4.00px;background:#c6dafc;"></div>
<div class="t" style="left:760.90px;top:650.23px;font-size:8px;color:#5f6368;font-weight:400;">1.4%</div>
<div class="r" style="left:815.25px;top:652.00px;width:4.00px;height:4.00px;background:#f9ab00;"></div>
<div class="t" style="left:822.75px;top:650.23px;font-size:8px;color:#5f6368;font-weight:400;">1.6%</div>
<div class="r" style="left:877.75px;top:652.00px;width:4.00px;height:4.00px;background:#1e8e3e;"></div>
<div class="t" style="left:885.25px;top:650.23px;font-size:8px;color:#5f6368;font-weight:400;">61.8%</div>
<div class="t" style="left:922.00px;top:633.78px;font-size:7.7px;color:#5f6368;font-weight:400;-webkit-text-stroke:0.22px #5f6368;">Clicks</div>
<div class="r" style="left:945.10px;top:635.75px;width:0;height:0;border-left:3.5px solid transparent;border-right:3.5px solid transparent;border-top:3.5px solid #5f6368"></div>
<div class="r" style="left:922.00px;top:642.80px;width:32.80px;height:0.80px;background:#e3e5e8;"></div>
<div class="r" style="left:686.00px;top:667.20px;width:95.40px;height:15.00px;background:#4285f4;"></div>
<div class="r" style="left:781.40px;top:667.20px;width:2.50px;height:15.00px;background:#c6dafc;"></div>
<div class="r" style="left:783.90px;top:667.20px;width:4.70px;height:15.00px;background:#f9ab00;"></div>
<div class="r" style="left:788.60px;top:667.20px;width:120.00px;height:15.00px;background:#1e8e3e;"></div>
<div class="t" style="left:922.00px;top:672.48px;font-size:7.7px;color:#5f6368;font-weight:400;">Cost</div>
<div class="r" style="left:35.00px;top:673.60px;width:954.00px;height:1.00px;background:#e2e3e5;"></div>
<div class="r" style="left:0.00px;top:674.60px;width:1024.00px;height:26.00px;background:#fff;"></div>
</body></html>
